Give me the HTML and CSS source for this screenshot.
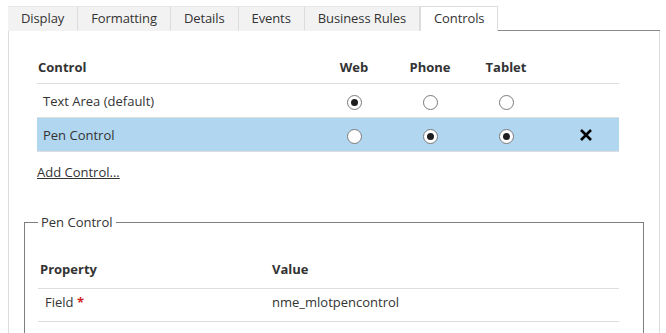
FILE: index.html
```html
<!DOCTYPE html>
<html lang="en">
<head>
  <meta charset="UTF-8">
  <title>Field Properties - Controls</title>
  <link rel="stylesheet" href="styles.css">
</head>
<body>
  <div class="tabs">
    <a class="tab">Display</a>
    <a class="tab">Formatting</a>
    <a class="tab">Details</a>
    <a class="tab">Events</a>
    <a class="tab">Business Rules</a>
    <a class="tab active">Controls</a>
    <span class="tab-fill"></span>
  </div>

  <div class="panel">
    <table class="controls">
      <thead>
        <tr>
          <th class="col-name">Control</th>
          <th class="col-radio">Web</th>
          <th class="col-radio">Phone</th>
          <th class="col-radio">Tablet</th>
          <th class="col-del"></th>
        </tr>
      </thead>
      <tbody>
        <tr>
          <td>Text Area (default)</td>
          <td class="col-radio"><input type="radio" name="web" checked></td>
          <td class="col-radio"><input type="radio" name="phone"></td>
          <td class="col-radio"><input type="radio" name="tablet"></td>
          <td></td>
        </tr>
        <tr class="selected">
          <td>Pen Control</td>
          <td class="col-radio"><input type="radio" name="web"></td>
          <td class="col-radio"><input type="radio" name="phone" checked></td>
          <td class="col-radio"><input type="radio" name="tablet" checked></td>
          <td class="col-del">
            <svg width="14" height="14" viewBox="0 0 14 14">
              <path d="M2 2 L12 12 M12 2 L2 12" stroke="#000" stroke-width="2.6" fill="none"/>
            </svg>
          </td>
        </tr>
      </tbody>
    </table>

    <a class="add-link" href="#">Add Control...</a>

    <fieldset class="props">
      <legend>Pen Control</legend>
      <table class="prop-table">
        <thead>
          <tr>
            <th class="col-prop">Property</th>
            <th>Value</th>
          </tr>
        </thead>
        <tbody>
          <tr>
            <td class="col-prop">Field <span class="req">*</span></td>
            <td>nme_mlotpencontrol</td>
          </tr>
        </tbody>
      </table>
    </fieldset>
  </div>
</body>
</html>
```

FILE: styles.css
```css
body {
  margin: 0;
  font-family: "Open Sans", "Noto Sans", sans-serif;
  font-size: 13px;
  color: #333;
  background: #fff;
}

.tabs {
  display: flex;
  margin: 6px 0 0 8px;
  width: 652px;
  height: 25px;
}

.tab {
  flex-shrink: 0;
  white-space: nowrap;
  background: #f2f2f2;
  border-top: 1px solid #e6e6e6;
  border-right: 1px solid #dcdcdc;
  border-bottom: 1px solid #f2f2f2;
  padding: 0 13px;
  line-height: 23px;
  color: #333;
  letter-spacing: -0.1px;
}

.tab.active {
  background: #fff;
  border: 1px solid #dcdcdc;
  border-bottom: none;
  padding: 0 13px;
  height: 24px;
}

.tab-fill {
  flex: 1;
  border-bottom: 1px solid #8a8a8a;
}

.panel {
  margin-left: 8px;
  width: 652px;
  height: 302px;
  border-left: 1px solid #dcdcdc;
  border-right: 1px solid #dcdcdc;
  padding-top: 23px;
  box-sizing: border-box;
  overflow: hidden;
}

.controls {
  margin-left: 28px;
  width: 582px;
  border-collapse: collapse;
}

.controls th {
  text-align: left;
  font-weight: 700;
  height: 26px;
  padding: 0 0 3px 1px;
  border-bottom: 1px solid #dedede;
}

.controls td {
  height: 33px;
  padding: 0 0 0 6px;
  border-bottom: 1px solid #dedede;
}

.controls .col-name {
  width: 278px;
}

.controls .col-radio {
  width: 76px;
  text-align: center;
  padding: 0;
}

.controls th.col-radio {
  padding-bottom: 3px;
}

.controls .col-del {
  text-align: center;
  padding: 0 0 0 8px;
}

.controls .col-del svg {
  display: block;
  margin: 0 auto;
}

.controls tr.selected td {
  background: #b1d6f0;
}

input[type="radio"] {
  appearance: none;
  -webkit-appearance: none;
  width: 15px;
  height: 15px;
  margin: 0;
  border: 1px solid #7a7a7a;
  border-radius: 50%;
  background: #fff;
  vertical-align: middle;
  position: relative;
}

input[type="radio"]:checked::after {
  content: "";
  position: absolute;
  left: 3px;
  top: 3px;
  width: 7px;
  height: 7px;
  border-radius: 50%;
  background: #1e1e1e;
}

.add-link {
  display: inline-block;
  margin: 11px 0 0 28px;
  color: #333;
  text-decoration: underline;
}

.props {
  margin: 32px 0 0 15px;
  width: 620px;
  height: 140px;
  box-sizing: border-box;
  border: 1px solid #7f7f7f;
  padding: 0 0 0 13px;
}

.props legend {
  margin-left: 0;
  padding: 0 3px;
  color: #333;
}

.prop-table {
  margin-top: 28px;
  width: 581px;
  border-collapse: collapse;
}

.prop-table th {
  text-align: left;
  font-weight: 700;
  height: 20px;
  line-height: 20px;
  padding: 0 0 9px 2px;
  border-bottom: 1px solid #dedede;
}

.prop-table td {
  height: 26px;
  padding: 0 0 6px 7px;
  border-bottom: 1px solid #dedede;
}

.prop-table .col-prop {
  width: 227px;
}

.prop-table th + th,
.prop-table td + td {
  padding-left: 0;
}

.req {
  color: #d0221f;
  font-weight: 700;
}
```
